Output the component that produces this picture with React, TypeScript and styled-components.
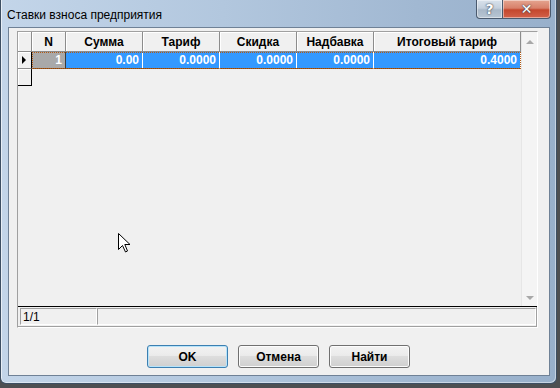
import React from 'react';
import styled, { createGlobalStyle } from 'styled-components';

const GlobalStyle = createGlobalStyle`
  html, body {
    margin: 0;
    padding: 0;
    background: #4d4f52;
  }
  body {
    font-family: "Liberation Sans", Arial, sans-serif;
    font-size: 12px;
    color: #000;
  }
  * {
    box-sizing: border-box;
  }
`;

const Window = styled.div`
  position: relative;
  width: 557px;
  height: 384px;
  padding: 0 6px 7px 7px;
  display: flex;
  flex-direction: column;
  background: linear-gradient(to right, #c3d5e9 0%, #b2c7de 40%, #a1b8d2 75%, #98b0cb 100%);
  border: 1px solid #3d4f63;
  border-top: none;
  border-radius: 0 0 6px 6px;
  box-shadow: inset 1px 0 0 rgba(255, 255, 255, 0.6), inset -1px -1px 0 rgba(255, 255, 255, 0.45);
`;

const TitleBar = styled.div`
  height: 28px;
  margin-left: -1px;
  display: flex;
  align-items: flex-start;
  justify-content: space-between;
`;

const Title = styled.div`
  padding-top: 8px;
  font-family: "Liberation Sans", Arial, sans-serif;
  font-size: 12px;
  line-height: 14px;
  color: #000;
`;

const Controls = styled.div`
  display: flex;
  margin-right: -1px;
`;

const CaptionButton = styled.div<{ $close?: boolean }>`
  width: ${p => (p.$close ? 48 : 27)}px;
  height: 19px;
  display: flex;
  align-items: center;
  justify-content: center;
  border: 1px solid #4a5a6e;
  border-top: none;
  border-left: ${p => (p.$close ? 'none' : '1px solid #4a5a6e')};
  border-radius: ${p => (p.$close ? '0 0 4px 0' : '0 0 0 4px')};
  background: ${p =>
    p.$close
      ? 'linear-gradient(#e4a590 0%, #d8806a 45%, #c4472d 55%, #d2614a 100%)'
      : 'linear-gradient(#d9e2ec 0%, #c4d0dd 45%, #a9b8c8 55%, #b8c6d4 100%)'};
  box-shadow: inset 0 0 0 1px rgba(255, 255, 255, 0.45);
  color: #fff;
  font-family: "DejaVu Sans", sans-serif;
  font-weight: bold;
  font-size: 14px;
  line-height: 1;
  padding-bottom: 1px;
  text-shadow: 0 0 2px #3a4350, 0 0 1px #3a4350;
`;

const Client = styled.div`
  flex: 1;
  display: flex;
  flex-direction: column;
  background: #f0f0f0;
  border: 1px solid #6f8196;
  padding: 3px 11px 7px 8px;
`;

const GridPanel = styled.div`
  height: 297px;
  display: flex;
  flex-direction: column;
  border-top: 1px solid #a0a0a0;
  border-left: 1px solid #a0a0a0;
  border-right: 1px solid #ffffff;
  border-bottom: 1px solid #ffffff;
  box-shadow: inset 0 -1px 0 #a0a0a0, inset -1px 0 0 #a0a0a0;
`;

const GridArea = styled.div`
  flex: 1;
  display: flex;
  border-bottom: 1px solid #000;
`;

const Table = styled.div`
  width: 503px;
  display: flex;
  flex-direction: column;
`;

const Row = styled.div`
  display: flex;
`;

const HeaderCell = styled.div<{ $w: number }>`
  width: ${p => p.$w}px;
  height: 20px;
  display: flex;
  align-items: center;
  justify-content: center;
  background: #f0f0f0;
  border-right: 1px solid #8c8c8c;
  border-bottom: 1px solid #8c8c8c;
  box-shadow: inset 1px 1px 0 #ffffff;
  font-weight: bold;
  font-size: 12px;
  color: #000;
`;

const Indicator = styled.div<{ $last?: boolean }>`
  width: 14px;
  height: 17px;
  display: flex;
  align-items: center;
  justify-content: center;
  background: #f0f0f0;
  border-right: 1px solid #000;
  border-bottom: 1px solid ${p => (p.$last ? '#000' : '#8c8c8c')};
  box-shadow: inset 1px 1px 0 #ffffff;
`;

const Arrow = styled.div`
  width: 0;
  height: 0;
  border-top: 4px solid transparent;
  border-bottom: 4px solid transparent;
  border-left: 4px solid #000;
  margin-left: -2px;
`;

const DataCells = styled.div`
  display: flex;
  outline: 1px dotted #b25a14;
  outline-offset: -1px;
`;

const Cell = styled.div<{ $w: number; $fixed?: boolean }>`
  width: ${p => p.$w}px;
  height: 17px;
  padding: 0 3px;
  display: flex;
  align-items: center;
  justify-content: flex-end;
  background: ${p => (p.$fixed ? '#a9a9a9' : '#3399ff')};
  border-right: 1px solid ${p => (p.$fixed ? '#3a3a3a' : '#ffffff')};
  border-bottom: 1px solid #7a4a20;
  color: #fff;
  font-weight: bold;
  font-size: 12px;
`;

const ScrollBar = styled.div`
  width: 17px;
  display: flex;
  flex-direction: column;
  justify-content: space-between;
  align-items: center;
  background: #f4f4f4;
  border-left: 1px solid #e6e6e6;
  padding: 8px 0 6px;
`;

const ScrollArrow = styled.div<{ $down?: boolean }>`
  width: 0;
  height: 0;
  border-left: 4px solid transparent;
  border-right: 4px solid transparent;
  ${p =>
    p.$down ? 'border-top: 4px solid #a8a8a8;' : 'border-bottom: 4px solid #a8a8a8;'}
`;

const StatusBar = styled.div`
  height: 20px;
  display: flex;
  padding: 1px 1px 2px 2px;
`;

const StatusPanel = styled.div<{ $w?: number }>`
  ${p => (p.$w ? `width: ${p.$w}px;` : 'flex: 1;')}
  height: 17px;
  padding-left: 2px;
  display: flex;
  align-items: center;
  border-top: 1px solid #a0a0a0;
  border-left: 1px solid #a0a0a0;
  border-right: 1px solid #ffffff;
  border-bottom: 1px solid #ffffff;
  font-size: 12px;
  color: #000;
`;

const ButtonRow = styled.div`
  margin-top: 17px;
  display: flex;
  justify-content: center;
  gap: 10px;
  padding-left: 2px;
`;

const Button = styled.button<{ $default?: boolean }>`
  width: 81px;
  height: 23px;
  padding: 0;
  border: 1px solid ${p => (p.$default ? '#3c7fb1' : '#707070')};
  border-radius: 3px;
  background: linear-gradient(#f2f2f2 0%, #ebebeb 45%, #dddddd 50%, #cfcfcf 100%);
  box-shadow: inset 0 0 0 1px ${p => (p.$default ? '#b6e3fa' : '#fcfcfc')};
  font-family: "Liberation Sans", Arial, sans-serif;
  font-weight: bold;
  font-size: 12px;
  color: #000;
`;

const Cursor = styled.svg`
  position: absolute;
  left: 117px;
  top: 233px;
`;

const columns = [
  { key: 'sum', title: 'Сумма', width: 77 },
  { key: 'tariff', title: 'Тариф', width: 77 },
  { key: 'discount', title: 'Скидка', width: 77 },
  { key: 'extra', title: 'Надбавка', width: 77 },
  { key: 'total', title: 'Итоговый тариф', width: 147 },
] as const;

const rowData: Record<(typeof columns)[number]['key'], string> = {
  sum: '0.00',
  tariff: '0.0000',
  discount: '0.0000',
  extra: '0.0000',
  total: '0.4000',
};

export default function App() {
  return (
    <>
      <GlobalStyle />
      <Window>
        <TitleBar>
          <Title>Ставки взноса предприятия</Title>
          <Controls>
            <CaptionButton>?</CaptionButton>
            <CaptionButton $close>✕</CaptionButton>
          </Controls>
        </TitleBar>

        <Client>
          <GridPanel>
            <GridArea>
              <Table>
                <Row>
                  <HeaderCell $w={14} />
                  <HeaderCell $w={34}>N</HeaderCell>
                  {columns.map(c => (
                    <HeaderCell key={c.key} $w={c.width}>
                      {c.title}
                    </HeaderCell>
                  ))}
                </Row>
                <Row>
                  <Indicator>
                    <Arrow />
                  </Indicator>
                  <DataCells>
                    <Cell $w={34} $fixed>
                      1
                    </Cell>
                    {columns.map(c => (
                      <Cell key={c.key} $w={c.width}>
                        {rowData[c.key]}
                      </Cell>
                    ))}
                  </DataCells>
                </Row>
                <Row>
                  <Indicator $last />
                </Row>
              </Table>
              <ScrollBar>
                <ScrollArrow />
                <ScrollArrow $down />
              </ScrollBar>
            </GridArea>
            <StatusBar>
              <StatusPanel $w={77}>1/1</StatusPanel>
              <StatusPanel />
            </StatusBar>
          </GridPanel>

          <ButtonRow>
            <Button $default>OK</Button>
            <Button>Отмена</Button>
            <Button>Найти</Button>
          </ButtonRow>
        </Client>

        <Cursor width="13" height="20" viewBox="0 0 13 20">
          <path
            d="M0.5 0.5 L0.5 16.5 L4.5 12.5 L7.5 19 L9.5 18 L6.8 11.5 L12 11.5 Z"
            fill="#fff"
            stroke="#000"
            strokeWidth="1"
            strokeLinejoin="miter"
          />
        </Cursor>
      </Window>
    </>
  );
}
